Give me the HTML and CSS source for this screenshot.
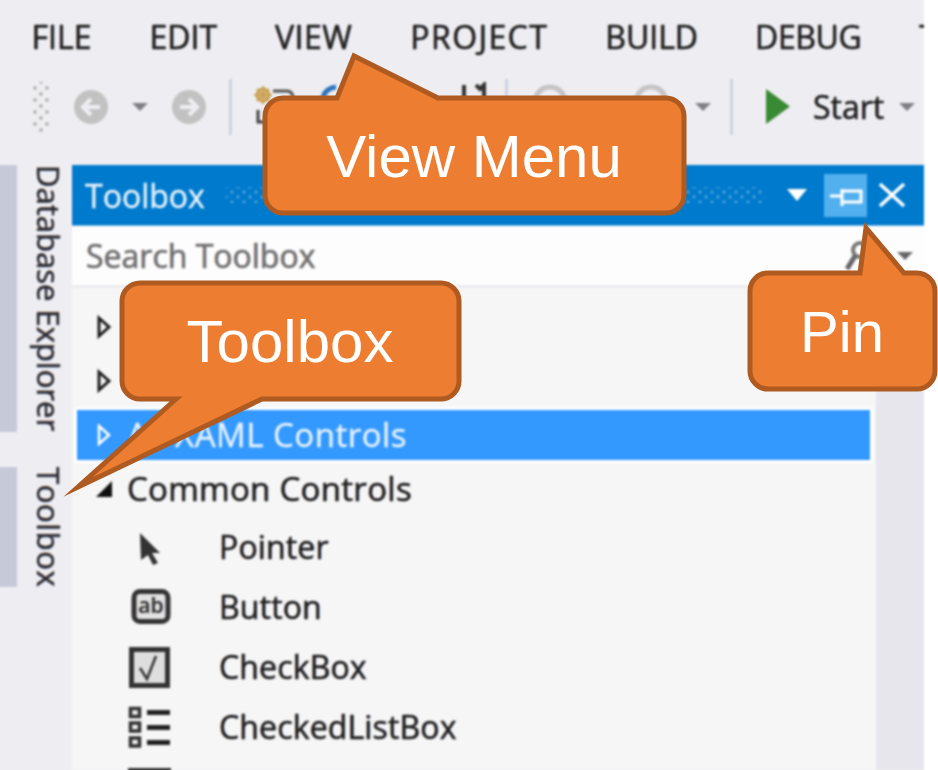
FILE: index.html
```html
<!DOCTYPE html>
<html lang="en">
<head>
<meta charset="utf-8">
<title>Toolbox</title>
<link rel="stylesheet" href="styles.css">
</head>
<body>
<div class="app">
  <nav class="menubar">
    <span>FILE</span><span>EDIT</span><span class="mi-view">VIEW</span><span class="mi-project">PROJECT</span><span class="mi-build">BUILD</span><span class="mi-debug">DEBUG</span><span>TEAM</span>
  </nav>
  <div class="toolbar">
    <div class="grip"></div>
    <svg class="nav-btn" viewBox="0 0 34 34"><circle cx="17" cy="17" r="17" fill="#c2c2c2"/><path d="M26 17H10M17 9l-8 8 8 8" fill="none" stroke="#eeeef2" stroke-width="4"/></svg>
    <i class="caret caret-back"></i>
    <svg class="nav-btn nav-fwd" viewBox="0 0 34 34"><circle cx="17" cy="17" r="17" fill="#c2c2c2"/><path d="M8 17h16M17 9l8 8-8 8" fill="none" stroke="#eeeef2" stroke-width="4"/></svg>
    <i class="sep sep-a"></i>
    <svg class="tool-icons" viewBox="0 0 240 50">
      <g fill="none" stroke="#c9a050"><circle cx="13" cy="13" r="6" stroke-width="3"/><path d="M13 4v18M4 13h18M7 7l12 12M19 7L7 19" stroke-width="2"/></g>
      <path d="M23 9h14q5 0 6 6" fill="none" stroke="#555" stroke-width="3"/>
      <path d="M8 28v12h12" fill="none" stroke="#444" stroke-width="3"/>
      <path d="M73 15q3-9 13-10" fill="none" stroke="#2f74bd" stroke-width="5"/>
      <path d="M214 3v14M226 3l4 4 4-4v14" fill="none" stroke="#333" stroke-width="4"/>
    </svg>
    <i class="sep sep-b"></i>
    <svg class="undo-icons" viewBox="0 0 150 50"><path d="M5 28q2-23 17-23t17 23M106 28q2-23 17-23t17 23" fill="none" stroke="#c4c4c6" stroke-width="5"/></svg>
    <i class="caret caret-undo"></i>
    <i class="sep sep-c"></i>
    <svg class="play" viewBox="0 0 24 35"><path d="M0 0L24 17.500L0 35Z" fill="#388a34"/></svg>
    <span class="start">Start</span>
    <i class="caret caret-start"></i>
  </div>
  <div class="workspace">
    <aside class="sidetabs">
      <div class="sidetab sidetab-db"><span class="band"></span><span class="sidelabel">Database Explorer</span></div>
      <div class="sidetab sidetab-tb"><span class="band"></span><span class="sidelabel sidelabel-tb">Toolbox</span></div>
    </aside>
    <section class="panel">
      <header class="titlebar">
        <span class="title">Toolbox</span>
        <span class="dots"></span>
        <i class="title-caret"></i>
        <span class="pin">
          <svg viewBox="0 0 43 43" width="43" height="43"><path d="M6 22h12M18 15v17M18 17h19v11H18" fill="none" stroke="#fff" stroke-width="3"/></svg>
        </span>
        <svg class="close" viewBox="0 0 28 24"><path d="M2 1l24 22M26 1L2 23" stroke="#fff" stroke-width="3.500" fill="none"/></svg>
      </header>
      <div class="search">
        <span class="search-text">Search Toolbox</span>
        <svg class="lens" viewBox="0 0 24 34"><circle cx="15" cy="11" r="7" fill="none" stroke="#777" stroke-width="4"/><path d="M10 17L2 30" stroke="#666" stroke-width="5"/></svg>
        <i class="caret caret-search"></i>
      </div>
      <div class="content">
        <div class="tree">
          <div class="group"><svg class="arrow" viewBox="0 0 14 24"><path d="M2 3l10 9-10 9z" fill="none" stroke="#1e1e1e" stroke-width="3"/></svg><span>Data</span></div>
          <div class="group"><svg class="arrow" viewBox="0 0 14 24"><path d="M2 3l10 9-10 9z" fill="none" stroke="#1e1e1e" stroke-width="3"/></svg><span>General</span></div>
          <div class="group group-active"><svg class="arrow" viewBox="0 0 14 24"><path d="M2 3l10 9-10 9z" fill="none" stroke="#fff" stroke-width="2.500"/></svg><span>All XAML Controls</span></div>
          <div class="group"><svg class="arrow" viewBox="0 0 14 24"><path d="M15 4v16H-1z" fill="#111"/></svg><span>Common Controls</span></div>
          <div class="item item-first">
            <svg class="tool" viewBox="0 0 44 44"><path d="M13 8L33 28H25L31 38L26 40L21 30L14 35Z" fill="#333"/></svg>
            <span>Pointer</span>
          </div>
          <div class="item">
            <svg class="tool" viewBox="0 0 44 44"><rect x="7" y="6.500" width="34" height="30" rx="6" fill="#e2e2e2" stroke="#333" stroke-width="5"/><text class="ab" x="24" y="28" text-anchor="middle">ab</text></svg>
            <span>Button</span>
          </div>
          <div class="item">
            <svg class="tool" viewBox="0 0 44 44"><rect x="4.500" y="4.500" width="36" height="36" fill="#dedede" stroke="#333" stroke-width="5"/><path d="M13 23l7 11 9-23" fill="none" stroke="#333" stroke-width="2.500"/></svg>
            <span>CheckBox</span>
          </div>
          <div class="item">
            <svg class="tool" viewBox="0 0 44 44"><g fill="#eee" stroke="#333" stroke-width="3.500"><rect x="3.500" y="3.500" width="9" height="8"/><rect x="3.500" y="18" width="9" height="8"/><rect x="3.500" y="33" width="9" height="8"/></g><path d="M20 7.500h23M20 22.500h23M20 37.500h23" stroke="#222" stroke-width="5"/></svg>
            <span>CheckedListBox</span>
          </div>
          <div class="item">
            <svg class="tool" viewBox="0 0 44 44"><rect x="3" y="5" width="39" height="30" fill="#e6e6e6" stroke="#333" stroke-width="4"/></svg>
            <span>ComboBox</span>
          </div>
        </div>
        <div class="gutter"></div>
      </div>
    </section>
  </div>
</div>
<svg class="callouts" viewBox="0 0 938 770" width="938" height="770">
  <g class="shape">
    <path d="M283 98H337L354 56L438 98H666A18 18 0 0 1 684 116V195A18 18 0 0 1 666 213H283A18 18 0 0 1 265 195V116A18 18 0 0 1 283 98Z"/>
    <path d="M140 283H441A18 18 0 0 1 459 301V381A18 18 0 0 1 441 399H262L78 487L176 399H140A18 18 0 0 1 122 381V301A18 18 0 0 1 140 283Z"/>
    <path d="M768 273H860L866 228L904 273H917A18 18 0 0 1 935 291V371A18 18 0 0 1 917 389H768A18 18 0 0 1 750 371V291A18 18 0 0 1 768 273Z"/>
  </g>
  <text class="label label-view" x="474" y="177">View Menu</text>
  <text class="label label-toolbox" x="290" y="362">Toolbox</text>
  <text class="label label-pin" x="842" y="352">Pin</text>
</svg>
</body>
</html>
```
FILE: styles.css
```css
* { box-sizing: border-box; }
html, body { margin: 0; height: 100%; background: #fff; overflow: hidden; }
body { position: relative; width: 938px; height: 770px; }

.app {
  width: 928px;
  height: 778px;
  margin: -4px 0 0 -4px;
  padding: 4px 0 4px 4px;
  display: flex;
  flex-direction: column;
  background: #eeeef2;
  color: #1e1e1e;
  font-family: "Open Sans", "Noto Sans", sans-serif;
  font-size: 32px;
  -webkit-text-stroke: 0.4px currentColor;
  text-shadow: 0.8px 0 rgba(0, 70, 190, 0.3), -0.8px 0 rgba(190, 90, 0, 0.3);
  overflow: hidden;
  filter: blur(0.8px);
}

.menubar {
  height: 75px;
  flex: none;
  display: flex;
  align-items: center;
  gap: 58px;
  padding: 0 0 2px 31.5px;
  white-space: nowrap;
}
.mi-view { letter-spacing: 0.5px; }
.mi-project { letter-spacing: 1.4px; }
.mi-build { margin-left: -1px; }
.mi-debug { letter-spacing: -0.4px; margin-left: -1px; }

.toolbar {
  height: 64px;
  flex: none;
  margin-bottom: 26px;
  padding: 0 0 1px 33px;
  display: flex;
  align-items: center;
}
.grip {
  flex: none;
  width: 17px;
  height: 50px;
  background-image:
    radial-gradient(circle, #b4b4b4 1.5px, transparent 2.2px),
    radial-gradient(circle, #b4b4b4 1.5px, transparent 2.2px);
  background-size: 12px 12px;
  background-position: -4px 0, 2px 6px;
}
.nav-btn { width: 34px; height: 34px; margin-left: 24px; flex: none; }
.nav-fwd { margin-left: 24px; }
.caret {
  flex: none;
  width: 0;
  height: 0;
  border-left: 8px solid transparent;
  border-right: 8px solid transparent;
  border-top: 8px solid #7f7f85;
}
.caret-back { margin-left: 24px; }
.caret-undo { margin-left: 17px; }
.caret-start { margin-left: 18px; }
.sep { flex: none; width: 3px; height: 56px; background: #ced1e0; }
.sep-a { margin-left: 23px; }
.sep-b { margin-left: 15px; }
.sep-c { margin-left: 19px; }
.tool-icons { width: 240px; height: 50px; margin-left: 18px; flex: none; }
.undo-icons { width: 150px; height: 50px; margin-left: 20px; flex: none; }
.play { width: 24px; height: 35px; margin-left: 33px; flex: none; }
.start { margin-left: 23px; width: 68px; flex: none; }

.workspace { flex: 1; display: flex; min-height: 0; }

.sidetabs {
  width: 72px;
  flex: none;
  display: flex;
  flex-direction: column;
  gap: 35px;
}
.sidetab { display: flex; }
.sidetab-db { height: 267px; }
.sidetab-tb { height: 120px; }
.band { width: 21px; margin-left: -4px; background: #c6c9d8; }
.sidelabel {
  writing-mode: vertical-rl;
  margin-left: 16px;
  font-size: 31px;
  line-height: 32px;
  white-space: nowrap;
  color: #2a2a30;
}
.sidelabel-tb { letter-spacing: 0.6px; }

.panel { flex: 1; display: flex; flex-direction: column; min-width: 0; }

.titlebar {
  height: 61px;
  flex: none;
  display: flex;
  align-items: center;
  background: #007acc;
  border-bottom: 1px solid #6fb5e4;
  padding-left: 13px;
  color: #e4f1fb;
  text-shadow: none;
}
.title { font-size: 32px; width: 141px; flex: none; }
.dots {
  flex: none;
  width: 539px;
  height: 16px;
  background-image:
    radial-gradient(circle, #52a6e0 1.3px, transparent 1.8px),
    radial-gradient(circle, #52a6e0 1.3px, transparent 1.8px);
  background-size: 12px 10px;
  background-position: 0 0, 6px 5px;
}
.title-caret {
  flex: none;
  margin-left: 22px;
  width: 0;
  height: 0;
  border-left: 10px solid transparent;
  border-right: 10px solid transparent;
  border-top: 12px solid #fff;
}
.pin {
  flex: none;
  margin-left: 17px;
  width: 43px;
  height: 43px;
  background: #52b0ef;
}
.pin svg { display: block; }
.close { flex: none; width: 28px; height: 24px; margin-left: 11px; }

.search {
  height: 62px;
  flex: none;
  display: flex;
  align-items: center;
  background: #fdfdfd;
  border-bottom: 3px solid #ececf0;
  padding-left: 14px;
  color: #717171;
  font-size: 32px;
}
.search-text { width: 759px; flex: none; }
.lens { width: 24px; height: 34px; flex: none; }
.caret-search { margin-left: 28px; border-top-color: #666; }

.content { flex: 1; display: flex; min-height: 0; }
.tree {
  flex: 1;
  background: #f6f6f6;
  padding-top: 12px;
  min-width: 0;
}
.gutter { width: 48px; flex: none; background: #e6e6ec; }

.group {
  height: 54px;
  margin: 0 6px 0 5px;
  padding-left: 20px;
  display: flex;
  align-items: center;
  gap: 16px;
  font-size: 33px;
  letter-spacing: 0.3px;
  white-space: nowrap;
}
.group span, .item span { padding-bottom: 2px; }
.group-active {
  height: 50px;
  margin-top: 2px;
  margin-bottom: 2px;
  background: #3399ff;
  color: #e4f1ff;
  text-shadow: none;
  letter-spacing: 0.5px;
  box-shadow: 0 0 0 3px #fff;
}
.arrow { width: 14px; height: 24px; flex: none; overflow: visible; }

.item {
  height: 60px;
  padding-left: 55px;
  display: flex;
  align-items: center;
  gap: 48px;
  letter-spacing: 0.15px;
  white-space: nowrap;
}
.item-first { margin-top: 1px; }
.tool { width: 44px; height: 44px; flex: none; }
.ab { font: 600 21px "Open Sans", sans-serif; fill: #333; stroke: none; }

.callouts { position: absolute; left: 0; top: 0; display: block; }
.shape path {
  fill: #ed7d31;
  stroke: #ae5a21;
  stroke-width: 5px;
  stroke-miterlimit: 10;
}
.label {
  fill: #fff;
  font-family: "Liberation Sans", Arial, sans-serif;
  text-anchor: middle;
}
.label-view { font-size: 60px; }
.label-toolbox { font-size: 60px; }
.label-pin { font-size: 58px; }
```
